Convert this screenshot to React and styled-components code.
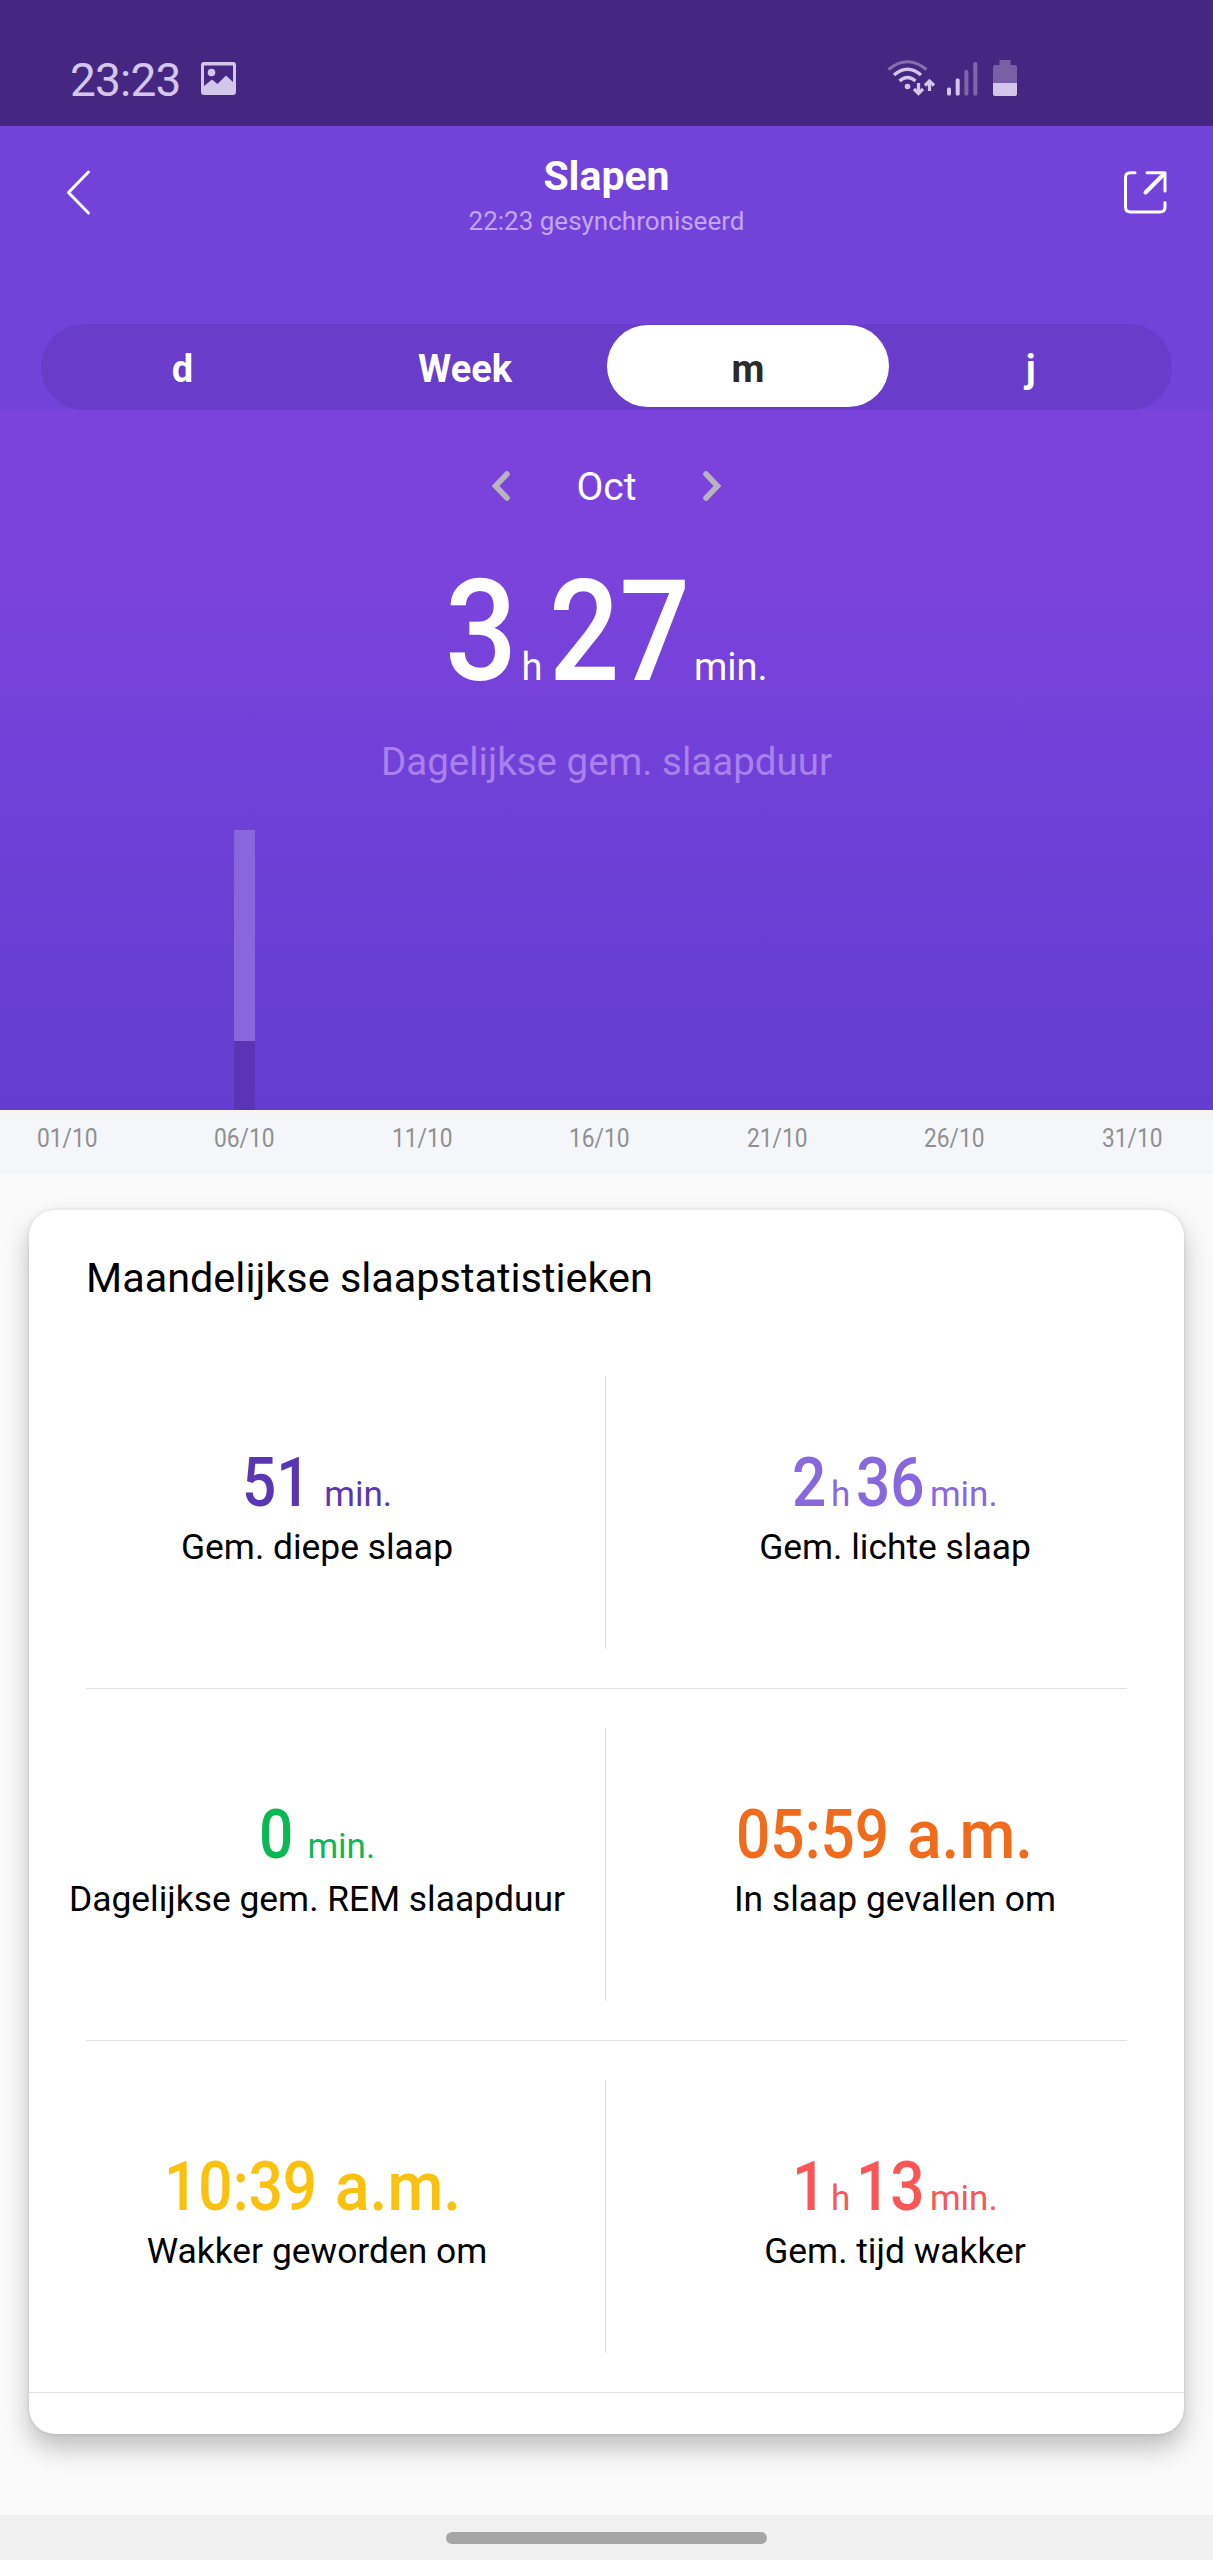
import React, { useState } from "react";
import styled, { createGlobalStyle } from "styled-components";

const GlobalStyle = createGlobalStyle`
  * {
    box-sizing: border-box;
  }

  body {
    margin: 0;
    background-color: #fafafa;
    font-family: Roboto, "Liberation Sans", sans-serif;
  }
`;

const Screen = styled.div`
  width: 1213px;
  height: 2560px;
  display: flex;
  flex-direction: column;
  overflow: hidden;
  background-color: #fafafa;
`;

// Status bar
const StatusBar = styled.div`
  height: 126px;
  padding: 0 196px 0 70px;
  display: flex;
  align-items: flex-start;
  justify-content: space-between;
  background-color: #452781;
  color: #d4c6ea;
`;

const StatusLeft = styled.div`
  display: flex;
  align-items: flex-start;
  padding-top: 53px;
`;

const Clock = styled.span`
  width: 131px;
  font-size: 46px;
  line-height: 54px;
  letter-spacing: -0.8px;
`;

const PictureIcon = styled.svg`
  margin-top: 9px;
`;

const StatusRight = styled.div`
  display: flex;
  align-items: flex-start;
  padding-top: 60px;
`;

const SignalIcon = styled.svg`
  margin: 2px 15px 0 11px;
`;

// Header
const TopArea = styled.div`
  height: 284px;
  background-color: #7342d9;
`;

const Header = styled.header`
  height: 198px;
  padding: 0 46px 0 66px;
  display: flex;
  justify-content: space-between;
`;

const IconButton = styled.button`
  width: 43px;
  height: 46px;
  margin-top: 43px;
  padding: 0;
  border: none;
  background: none;
  display: flex;
  cursor: pointer;
`;

const HeaderText = styled.div`
  padding: 26px 20px 0 0;
  text-align: center;
`;

const Title = styled.h1`
  margin: 0 0 6px;
  font-size: 41px;
  line-height: 48px;
  font-weight: 700;
  color: #ffffff;
`;

const SyncText = styled.div`
  font-size: 26px;
  line-height: 30px;
  color: #c3a5f3;
`;

const Tabs = styled.div`
  height: 86px;
  margin: 0 41px;
  display: grid;
  grid-template-columns: repeat(4, 1fr);
  border-radius: 43px;
  background-color: #6a3cca;
`;

const Tab = styled.button`
  height: 82px;
  margin-top: 1px;
  padding: 6px 0 0;
  border: none;
  border-radius: 41px;
  background-color: ${(props) => (props.$active ? "#ffffff" : "transparent")};
  color: ${(props) => (props.$active ? "#2b2b2b" : "#ffffff")};
  font-family: inherit;
  font-size: 38px;
  font-weight: 700;
  cursor: pointer;
`;

// Summary + chart
const Summary = styled.section`
  height: 700px;
  padding-top: 53px;
  display: flex;
  flex-direction: column;
  align-items: center;
  background: linear-gradient(#7c43dc 0%, #7b43dc 22%, #6f40d7 58%, #643dd0 100%);
`;

const MonthPicker = styled.div`
  width: 231px;
  height: 48px;
  display: flex;
  align-items: center;
  justify-content: space-between;
`;

const MonthArrow = styled.svg`
  margin-top: -3px;
`;

const Month = styled.span`
  font-size: 39px;
  line-height: 48px;
  color: #ffffff;
`;

const Total = styled.div`
  height: 120px;
  margin-top: 61px;
  display: flex;
  align-items: baseline;
  color: #ffffff;
  line-height: 120px;
`;

// Narrow digits: the glyphs are squeezed, so the box gets the squeezed width
const Digits = styled.span`
  width: ${(props) => props.$width}px;
  font-size: ${(props) => props.$size}px;
  font-weight: 500;
  white-space: nowrap;
  transform: scaleX(${(props) => props.$scale || 0.875});
  transform-origin: 0 50%;
`;

const Unit = styled.span`
  margin-left: ${(props) => props.$left}px;
  margin-right: ${(props) => props.$right || 0}px;
  font-size: ${(props) => props.$size}px;
  font-weight: 400;
`;

const TotalLabel = styled.div`
  margin-top: 47px;
  font-size: 38.5px;
  line-height: 46px;
  color: #a980ec;
`;

const Chart = styled.div`
  flex: 1;
  width: 100%;
  padding-left: 49px;
  display: grid;
  grid-template-columns: repeat(31, 35.5px);
  align-items: end;
`;

const Day = styled.div`
  width: 21px;
  margin: 0 auto;
  display: flex;
  flex-direction: column;
`;

const Bar = styled.div`
  height: ${(props) => props.$height}px;
  background-color: ${(props) => props.$color};
`;

const Axis = styled.div`
  height: 64px;
  padding: 20px 51.5px 0 36.5px;
  display: flex;
  justify-content: space-between;
  background: linear-gradient(#f5f5f8, #f4f7fa);
`;

const AxisLabel = styled.span`
  width: 60px;
  font-size: 25px;
  line-height: 18px;
  color: #909090;
  white-space: nowrap;
  transform: scaleX(0.91);
  transform-origin: 0 50%;
`;

// Statistics card
const Card = styled.section`
  height: 1224px;
  margin: 36px 29px 81px;
  display: flex;
  flex-direction: column;
  border-radius: 26px;
  background-color: #ffffff;
  box-shadow: 0 14px 26px rgba(0, 0, 0, 0.24), 0 0 4px rgba(0, 0, 0, 0.12);
`;

const CardTitle = styled.h2`
  margin: 44px 0 34px 57px;
  font-size: 41.4px;
  line-height: 48px;
  font-weight: 400;
  color: #000000;
`;

const StatRow = styled.div`
  height: 352px;
  display: grid;
  grid-template-columns: 576px 1px 578px;
  background: ${(props) =>
    props.$line
      ? "linear-gradient(#dfdfdf, #dfdfdf) 57px 0 / 1041px 1px no-repeat"
      : "none"};
`;

const Divider = styled.div`
  height: 273px;
  margin-top: 40px;
  background-color: #dfdfdf;
`;

const Stat = styled.div`
  padding-top: 117px;
  display: flex;
  flex-direction: column;
  align-items: center;
`;

const StatValue = styled.div`
  height: 60px;
  display: flex;
  align-items: baseline;
  line-height: 60px;
  color: ${(props) => props.$color};
`;

const StatLabel = styled.div`
  margin-top: 12px;
  font-size: 35.4px;
  line-height: 44px;
  color: #000000;
  white-space: nowrap;
`;

const CardFooter = styled.div`
  flex: 1;
  border-top: 1px solid #dfdfdf;
`;

const NavBar = styled.div`
  flex: 1;
  padding-top: 17px;
  background-color: #f1f1f1;
`;

const HomeHandle = styled.div`
  width: 321px;
  height: 12px;
  margin: 0 auto;
  border-radius: 6px;
  background-color: #a6a6a6;
`;

const days = Array.from({ length: 31 }, (_, i) =>
  i === 5 ? { light: 211, deep: 69 } : null
);

const axisLabels = ["01/10", "06/10", "11/10", "16/10", "21/10", "26/10", "31/10"];

const stats = [
  [
    { label: "Gem. diepe slaap", color: "#5a36b2", minutes: "51" },
    { label: "Gem. lichte slaap", color: "#8868dc", hours: "2", minutes: "36" },
  ],
  [
    { label: "Dagelijkse gem. REM slaapduur", color: "#0cb853", minutes: "0" },
    { label: "In slaap gevallen om", color: "#f06c1c", time: "05:59", suffixWidth: 147 },
  ],
  [
    { label: "Wakker geworden om", color: "#fbc10f", time: "10:39", suffixWidth: 136 },
    { label: "Gem. tijd wakker", color: "#fa5656", hours: "1", minutes: "13" },
  ],
];

const DIGIT = 33.6;

const Value = ({ stat }) => {
  if (stat.time) {
    return (
      <StatValue $color={stat.color}>
        <Digits $size={69} $width={171}>{stat.time}</Digits>
        <Digits $size={69} $width={stat.suffixWidth} $scale={0.93}>a.m.</Digits>
      </StatValue>
    );
  }
  return (
    <StatValue $color={stat.color}>
      {stat.hours && (
        <>
          <Digits $size={69} $width={DIGIT}>{stat.hours}</Digits>
          <Unit $size={35} $left={5} $right={6}>h</Unit>
        </>
      )}
      <Digits $size={69} $width={DIGIT * stat.minutes.length}>{stat.minutes}</Digits>
      <Unit $size={35} $left={stat.hours ? 6.5 : 15}>min.</Unit>
    </StatValue>
  );
};

const App = () => {
  const [tab, setTab] = useState("m");

  return (
    <>
      <GlobalStyle />
      <Screen>
        <StatusBar>
          <StatusLeft>
            <Clock>23:23</Clock>
            <PictureIcon width="35" height="33" viewBox="0 0 35 33">
              <path
                fill="currentColor"
                fillRule="evenodd"
                d="M3 0H32Q35 0 35 3V30Q35 33 32 33H3Q0 33 0 30V3Q0 0 3 0ZM3 3.5V24L11 17.5L16.5 22L25 13.5L32 20V3.5Z"
              />
              <circle cx="10.5" cy="10.5" r="3.8" fill="currentColor" />
            </PictureIcon>
          </StatusLeft>
          <StatusRight>
            <svg width="49" height="36" viewBox="0 0 49 36" fill="none" stroke="currentColor">
              <path d="M1.5 9.5Q20.5 -6 39.5 9.5" strokeWidth="3" opacity="0.45" />
              <path d="M7 15Q20.5 3.5 34 15" strokeWidth="3.4" />
              <path d="M12.5 21Q20.5 14 28.5 21" strokeWidth="3.4" />
              <circle cx="20.5" cy="26.5" r="2.8" fill="currentColor" stroke="none" />
              <path d="M31.5 23V33M27 29L31.5 33.5L36 29" strokeWidth="3.2" />
              <path d="M42.5 31V21M38 25.5L42.5 21L47 25.5" strokeWidth="3.2" />
            </svg>
            <SignalIcon width="31" height="34" viewBox="0 0 31 34" fill="currentColor">
              <rect x="0" y="25.5" width="4" height="8" rx="1.5" />
              <rect x="8.7" y="16.5" width="4" height="17" rx="1.5" />
              <rect x="17.4" y="8" width="4" height="25.5" rx="1.5" opacity="0.4" />
              <rect x="26.3" y="0" width="4" height="33.5" rx="1.5" opacity="0.4" />
            </SignalIcon>
            <svg width="24" height="36" viewBox="0 0 24 36" fill="currentColor">
              <path
                d="M6.5 0H17.5V5H22Q24 5 24 7V23H0V7Q0 5 2 5H6.5Z"
                opacity="0.36"
              />
              <path d="M0 23H24V34Q24 36 22 36H2Q0 36 0 34Z" />
            </svg>
          </StatusRight>
        </StatusBar>

        <TopArea>
          <Header>
            <IconButton aria-label="Terug">
              <svg width="26" height="46" viewBox="0 0 26 46" fill="none">
                <path
                  d="M22.5 3L2.5 23.5L22.5 44"
                  stroke="#ffffff"
                  strokeWidth="3"
                  strokeLinecap="round"
                  strokeLinejoin="round"
                />
              </svg>
            </IconButton>
            <HeaderText>
              <Title>Slapen</Title>
              <SyncText>22:23 gesynchroniseerd</SyncText>
            </HeaderText>
            <IconButton aria-label="Delen">
              <svg width="43" height="46" viewBox="0 0 43 46" fill="none">
                <g stroke="#ffffff" strokeLinecap="round" strokeLinejoin="round">
                  <path
                    d="M11 3.7H6.5Q1.5 3.7 1.5 8.5V38Q1.5 43 6.5 43H36Q41 43 41 38V33.5"
                    strokeWidth="3"
                  />
                  <path d="M23 3.7H41V22" strokeWidth="3" />
                  <path d="M40 5L21.5 23.5" strokeWidth="4" />
                </g>
              </svg>
            </IconButton>
          </Header>
          <Tabs>
            {["d", "Week", "m", "j"].map((name) => (
              <Tab key={name} $active={tab === name} onClick={() => setTab(name)}>
                {name}
              </Tab>
            ))}
          </Tabs>
        </TopArea>

        <Summary>
          <MonthPicker>
            <MonthArrow width="20" height="30" viewBox="0 0 20 30" fill="none">
              <path
                d="M16 3L4.5 15L16 27"
                stroke="#b9b3bd"
                strokeWidth="5.5"
                strokeLinecap="round"
              />
            </MonthArrow>
            <Month>Oct</Month>
            <MonthArrow width="20" height="30" viewBox="0 0 20 30" fill="none">
              <path
                d="M4 3L15.5 15L4 27"
                stroke="#b9b3bd"
                strokeWidth="5.5"
                strokeLinecap="round"
              />
            </MonthArrow>
          </MonthPicker>
          <Total>
            <Digits $size={141} $width={70} $scale={0.9}>3</Digits>
            <Unit $size={38} $left={6} $right={7}>h</Unit>
            <Digits $size={141} $width={138} $scale={0.88}>27</Digits>
            <Unit $size={38} $left={6.5}>min.</Unit>
          </Total>
          <TotalLabel>Dagelijkse gem. slaapduur</TotalLabel>
          <Chart>
            {days.map((day, index) => (
              <Day key={index}>
                {day && (
                  <>
                    <Bar $height={day.light} $color="#8a66dd" />
                    <Bar $height={day.deep} $color="#5a34b4" />
                  </>
                )}
              </Day>
            ))}
          </Chart>
        </Summary>

        <Axis>
          {axisLabels.map((label) => (
            <AxisLabel key={label}>{label}</AxisLabel>
          ))}
        </Axis>

        <Card>
          <CardTitle>Maandelijkse slaapstatistieken</CardTitle>
          {stats.map(([left, right], index) => (
            <StatRow key={left.label} $line={index > 0}>
              <Stat>
                <Value stat={left} />
                <StatLabel>{left.label}</StatLabel>
              </Stat>
              <Divider />
              <Stat>
                <Value stat={right} />
                <StatLabel>{right.label}</StatLabel>
              </Stat>
            </StatRow>
          ))}
          <CardFooter />
        </Card>

        <NavBar>
          <HomeHandle />
        </NavBar>
      </Screen>
    </>
  );
};

export default App;
